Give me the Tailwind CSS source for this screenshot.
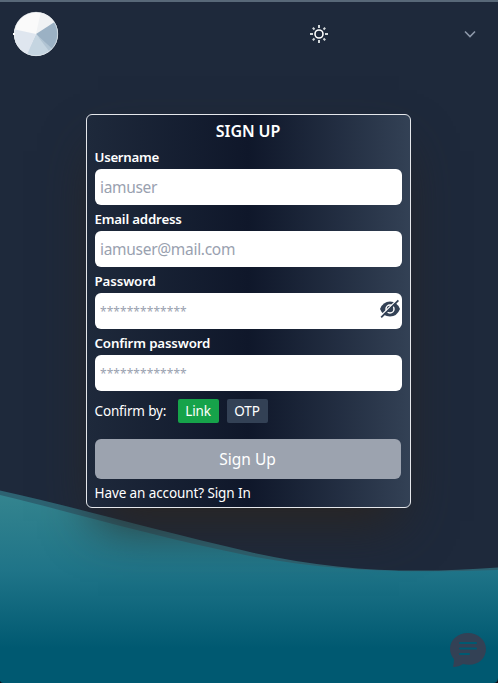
<!DOCTYPE html>
<html lang="en">
<head>
<meta charset="utf-8">
<meta name="viewport" content="width=device-width, initial-scale=1">
<title>Sign up</title>
<script src="https://cdn.jsdelivr.net/npm/@tailwindcss/browser@4"></script>
</head>
<body class="relative h-[683px] w-[498px] overflow-hidden bg-[#1e293b] font-['Noto_Sans',sans-serif] text-white">
<!-- Wave backdrop -->
<svg class="absolute inset-0" width="498" height="683" viewBox="0 0 498 683">
  <defs><linearGradient id="sea" gradientUnits="userSpaceOnUse" x1="0" y1="491" x2="0" y2="683">
    <stop offset="0" stop-color="#35858f"/><stop offset=".42" stop-color="#1f7488"/><stop offset=".82" stop-color="#005971"/><stop offset="1" stop-color="#005971"/>
  </linearGradient></defs>
  <path fill="#2d6271" d="M0 490.500C75 507 155 530 250 552C335 571 410 574 498 567.500V683H0Z"/>
  <path fill="url(#sea)" d="M0 495C75 513 155 537 250 556C335 572 410 573 498 570V683H0Z"/>
  <path fill="#100c16" d="M0 681Q1 683 3 683H0ZM498 678Q498 683 493 683H498Z"/>
</svg>
<div class="relative flex h-full flex-col items-center">
  <header class="flex h-[66px] w-full items-center border-t-2 border-[#586878] pr-[21px] pl-[13px]">
    <svg width="46" height="46" viewBox="0 0 46 46">
      <defs><clipPath id="disc"><circle cx="23" cy="23" r="22"/></clipPath></defs>
      <g clip-path="url(#disc)">
        <path fill="#fafafa" d="M0 0H46V46H0Z"/>
        <path fill="#f0f2f4" d="M23 23L28 0H46V8Z"/>
        <path fill="#9bb1c4" d="M23 23L46 8V46H44Z"/>
        <path fill="#b1c4d3" d="M23 23L44 42L37 46Z"/>
        <path fill="#c5d5e1" d="M23 23L39 44V46H12Z"/>
        <path fill="#dfe6ef" d="M23 23L13 46H0V18Z"/>
      </g>
      <circle cx="23" cy="23" r="21.7" fill="none" stroke="#e6ebef" stroke-width=".6"/><path fill="#fff" d="M0 22H2V24H0Z"/>
    </svg>
    <svg class="ml-[250px]" width="20" height="20" viewBox="0 0 20 20" fill="none" stroke="#fff">
      <circle cx="10" cy="10" r="4" stroke-width="1.6"/>
      <path stroke="#d3d8da" stroke-width="2" d="M10 1V4M10 16V19M1 10H4M16 10H19M3.8 3.8L5.5 5.5M14.5 14.5L16.2 16.2M3.8 16.2L5.5 14.5M14.5 5.5L16.2 3.8"/>
    </svg>
    <svg class="ml-auto" width="14" height="14" viewBox="0 0 14 14" fill="none" stroke="#8d98a9" stroke-width="1.6"><path d="M2 4.5L7 9.5L12 4.5"/></svg>
  </header>
  <main class="mt-12 mr-[2px] flex h-[394px] w-[325px] flex-col rounded-md border border-[#e5e7eb] bg-linear-to-r from-[#1e293b] via-[#0f172a] to-[#334155] px-2 shadow-[0_25px_50px_-12px_#2b2520]">
    <h1 class="h-7 pt-1 text-center text-[16px] leading-6 font-semibold tracking-[-0.1px]">SIGN UP</h1>
    <label for="user" class="h-[26px] pt-1 text-[13.3px] leading-5 font-semibold tracking-[-0.3px]">Username</label>
    <input id="user" class="h-9 rounded-md bg-white px-[5.5px] text-[15.5px] tracking-[-0.32px] placeholder:text-gray-400" placeholder="iamuser">
    <label for="mail" class="h-[26px] pt-1 text-[13.3px] leading-5 font-semibold tracking-[-0.2px]">Email address</label>
    <input id="mail" class="h-9 rounded-md bg-white px-[5.5px] text-[15.5px] tracking-[-0.3px] placeholder:text-gray-400" placeholder="iamuser@mail.com">
    <label for="pass" class="h-[26px] pt-1 text-[13.3px] leading-5 font-semibold tracking-[-0.1px]">Password</label>
    <div class="flex h-9 items-center rounded-md bg-white pr-px">
      <input id="pass" class="h-9 min-w-0 flex-1 px-[5.5px] text-[12px] tracking-[0.06px] placeholder:text-gray-400" placeholder="*************">
      <svg class="mb-1" width="22" height="22" viewBox="0 0 22 22">
        <path fill="#334155" d="M1 11Q4 3.500 11 3.500T21 11Q18 18.500 11 18.500T1 11Z"/>
        <circle cx="11" cy="11" r="4" fill="none" stroke="#fff" stroke-width="1.5"/>
        <path fill="none" stroke="#fff" stroke-width="1.4" d="M2 17.5L18.5 1.5"/><path fill="none" stroke="#334155" stroke-width="1.8" d="M2.2 19.4L19.4 2.3"/>
      </svg>
    </div>
    <label for="confirm" class="h-[26px] pt-1 text-[13.3px] leading-5 font-semibold tracking-[-0.15px]">Confirm password</label>
    <input id="confirm" class="h-9 rounded-md bg-white px-[5.5px] text-[12px] tracking-[0.06px] placeholder:text-gray-400" placeholder="*************">
    <div class="mt-2 flex h-6 items-center text-[13.5px] tracking-[-0.15px]">
      <span class="w-[83px]">Confirm by:</span>
      <button class="h-6 w-[41px] rounded-xs bg-[#16a34a]">Link</button>
      <button class="ml-2 h-6 w-[41px] rounded-xs bg-[#334155]">OTP</button>
    </div>
    <button class="mt-4 mr-px h-10 rounded-md bg-[#9ca3af] pt-px text-[15.5px]">Sign Up</button>
    <p class="mt-1 text-[13.5px] leading-5 tracking-[-0.1px]">Have an account? <a href="#">Sign In</a></p>
  </main>
  <svg class="mt-auto mr-[11px] mb-[15px] self-end" width="38" height="36" viewBox="0 0 38 36">
    <path fill="#334155" d="M19 1C8.500 1 1 8 1 17C1 21 3 25 5 27Q5 31 4 35Q10 35 14 32C27 35 37 28 37 17C37 8 29 1 19 1Z"/>
    <path stroke="#005971" stroke-width="2.100" stroke-linecap="round" d="M11 11H27M11 16.500H27M11 22H20"/>
  </svg>
</div>
</body>
</html>
